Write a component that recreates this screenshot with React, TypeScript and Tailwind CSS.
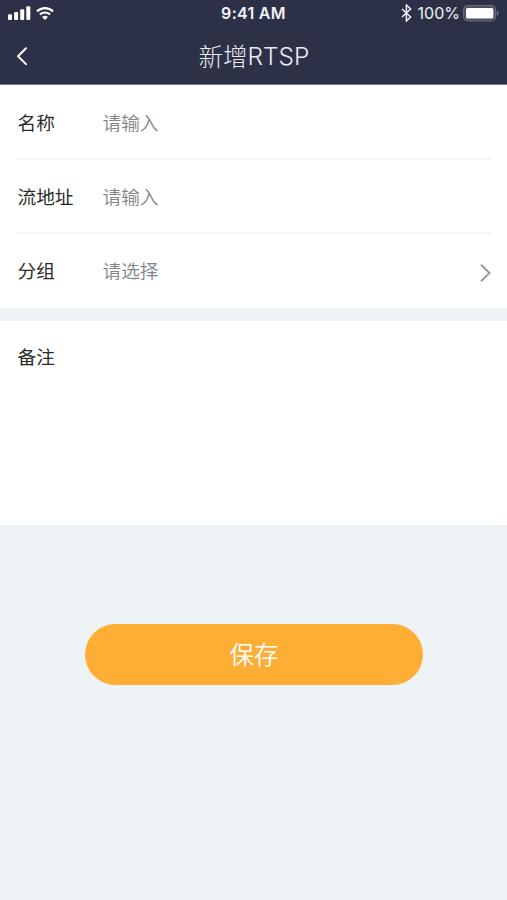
import type { ReactNode } from "react";

function SignalIcon() {
  return (
    <svg width="23" height="15" viewBox="0 0 23 15" fill="#fff">
      <rect x="0" y="8.2" width="4" height="5.8" rx="1.1" />
      <rect x="6.1" y="6" width="4" height="8" rx="1.1" />
      <rect x="12.2" y="3.2" width="4" height="10.8" rx="1.1" />
      <rect x="18.3" y="0.2" width="4" height="13.8" rx="1.1" />
    </svg>
  );
}

function WifiIcon() {
  return (
    <svg width="18" height="13" viewBox="0 0 18 13" fill="none" stroke="#fff">
      <path d="M1 4.4a11.4 11.4 0 0 1 16 0" strokeWidth="2.2" />
      <path d="M3.9 7.5a7.2 7.2 0 0 1 10.2 0" strokeWidth="2" />
      <path d="M9 13 6.1 10.1a4.2 4.2 0 0 1 5.8 0z" fill="#fff" stroke="none" />
    </svg>
  );
}

function BluetoothIcon() {
  return (
    <svg width="11" height="18" viewBox="0 0 11 18" fill="none" stroke="#f0f1f6">
      <path d="M1 5l8.6 8L5.4 17V1l4.2 4L1 13" strokeWidth="1.5" />
    </svg>
  );
}

function BatteryIcon() {
  return (
    <svg width="36" height="17" viewBox="0 0 36 17">
      <rect
        x="0.6"
        y="0.6"
        width="32"
        height="15.4"
        rx="4.5"
        fill="#4a4d61"
        stroke="#686b7e"
        strokeWidth="1.2"
      />
      <rect x="3" y="3" width="27.4" height="10.6" rx="1.6" fill="#fff" />
      <path d="M34.2 5.8c1.6.8 1.6 4.2 0 5z" fill="#8d8f9d" />
    </svg>
  );
}

function StatusBar() {
  return (
    <div className="grid h-[26px] grid-cols-3 items-center px-[8px] text-white">
      <div className="flex items-center gap-[5px]">
        <SignalIcon />
        <WifiIcon />
      </div>
      <div className="text-center font-[Inter,sans-serif] text-[16px] font-semibold leading-[26px] tracking-[0.3px] text-[#f2f3f7]">
        9:41 AM
      </div>
      <div className="flex items-center justify-end">
        <BluetoothIcon />
        <span className="ml-[6px] mr-[3px] font-[Inter,sans-serif] text-[16px] leading-[26px] text-[#f0f1f6]">
          100%
        </span>
        <BatteryIcon />
      </div>
    </div>
  );
}

function Row({
  label,
  children,
  last = false,
}: {
  label: string;
  children: ReactNode;
  last?: boolean;
}) {
  return (
    <div
      className={
        last
          ? "flex h-[74px] items-center pb-[2px]"
          : "flex h-[74px] items-center border-b-2 border-[#f5f5f5] pt-px"
      }
    >
      <span className="w-[86.5px] pl-[1.5px] text-[18.7px] text-[#2b2b2b]">
        {label}
      </span>
      <span className="flex-1 text-[18.7px] font-[350] text-[#858585]">
        {children}
      </span>
      {last && (
        <svg
          className="mt-[5px]"
          width="13"
          height="20"
          viewBox="0 0 13 20"
          fill="none"
          stroke="#9b9b9b"
        >
          <path d="M3 1.8 11.5 10 3 18.2" strokeWidth="2" />
        </svg>
      )}
    </div>
  );
}

export default function App() {
  return (
    <div className="flex h-[900px] w-[507px] flex-col overflow-hidden bg-[#edf2f4] font-['Noto_Sans_CJK_SC',sans-serif]">
      <header className="h-[85px] border-b border-[#77788a] bg-[#2d3147]">
        <StatusBar />
        <div className="grid h-[58px] grid-cols-[60px_1fr_60px] items-center">
          <button type="button" aria-label="返回" className="pl-[16px]">
            <svg
              width="12"
              height="20"
              viewBox="0 0 12 20"
              fill="none"
              stroke="#fff"
              strokeLinecap="round"
              strokeLinejoin="round"
            >
              <path d="M10 2.3 2 10.2l8 7.9" strokeWidth="2" />
            </svg>
          </button>
          <h1 className="flex items-center justify-center pl-[1px] text-[24.5px] font-light leading-[58px] text-[#e9eaf2]">
            <span className="pt-px">新增</span>
            <span className="font-[Inter,sans-serif]">RTSP</span>
          </h1>
        </div>
      </header>

      <section className="h-[223px] bg-white px-[16px] pt-px">
        <Row label="名称">请输入</Row>
        <Row label="流地址">请输入</Row>
        <Row label="分组" last>
          请选择
        </Row>
      </section>

      <section className="mt-[13px] h-[204px] bg-white px-[17.5px] pt-[21px]">
        <span className="block text-[18.7px] leading-[28px] text-[#2b2b2b]">
          备注
        </span>
      </section>

      <button
        type="button"
        className="mx-auto mt-[99px] h-[61px] w-[338px] rounded-full bg-[#ffae35] pb-[2px] pl-px text-[24.5px] font-[350] leading-[59px] text-white"
      >
        保存
      </button>
    </div>
  );
}
